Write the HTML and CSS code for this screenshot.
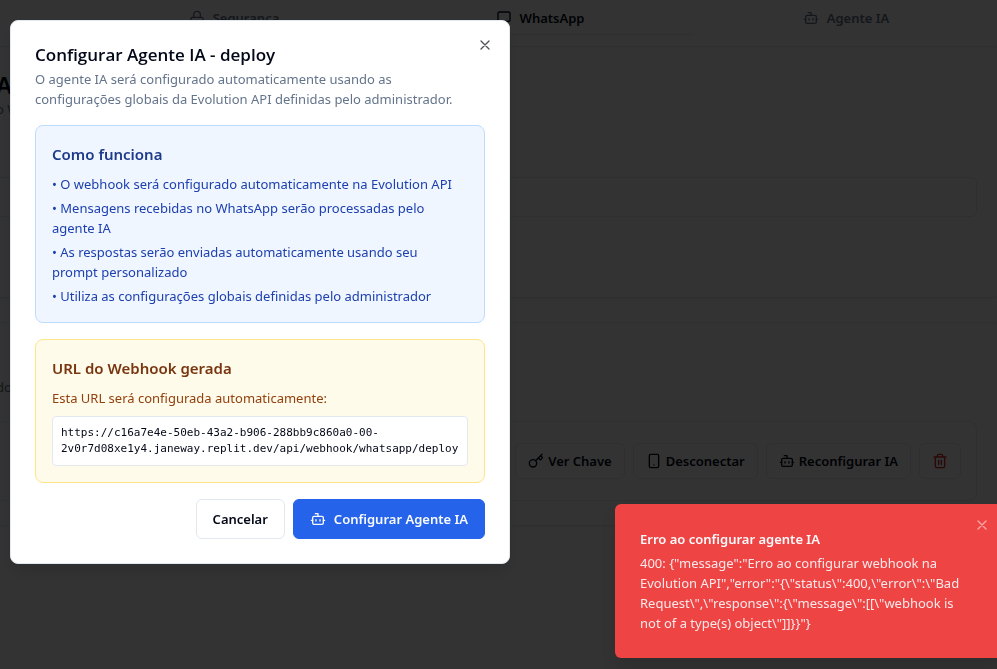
FILE: index.html
```html
<!DOCTYPE html>
<html lang="pt-BR">
<head>
<meta charset="utf-8">
<title>Configurar Agente IA</title>
<link rel="stylesheet" href="styles.css">
</head>
<body>
<svg class="sprite" aria-hidden="true">
  <symbol id="bot" viewBox="0 0 24 24"><path d="M12 8V4H8"/><rect width="16" height="12" x="4" y="8" rx="2"/><path d="M2 14h2M20 14h2M15 13v2M9 13v2"/></symbol>
  <symbol id="x" viewBox="0 0 24 24"><path d="M18 6 6 18M6 6l12 12"/></symbol>
  <symbol id="lock" viewBox="0 0 24 24"><rect width="18" height="11" x="3" y="11" rx="2"/><path d="M7 11V7a5 5 0 0 1 10 0v4"/></symbol>
  <symbol id="message" viewBox="0 0 24 24"><path d="M21 15a2 2 0 0 1-2 2H7l-4 4V5a2 2 0 0 1 2-2h14a2 2 0 0 1 2 2z"/></symbol>
  <symbol id="key" viewBox="0 0 24 24"><path d="m15.5 7.5 2.3 2.3a1 1 0 0 0 1.4 0l2.1-2.1a1 1 0 0 0 0-1.4L19 4M21 2l-9.6 9.6"/><circle cx="7.5" cy="15.5" r="5.5"/></symbol>
  <symbol id="phone" viewBox="0 0 24 24"><rect width="14" height="20" x="5" y="2" rx="2"/><path d="M12 18h.01"/></symbol>
  <symbol id="trash" viewBox="0 0 24 24"><path d="M3 6h18M19 6v14c0 1-1 2-2 2H7c-1 0-2-1-2-2V6M8 6V4c0-1 1-2 2-2h4c1 0 2 1 2 2v2M10 11v6M14 11v6"/></symbol>
</svg>

<div class="page">
  <nav class="tabs">
    <button class="tab"><svg class="icon"><use href="#lock"/></svg>Segurança</button>
    <button class="tab tab-active"><svg class="icon"><use href="#message"/></svg>WhatsApp</button>
    <button class="tab"><svg class="icon"><use href="#bot"/></svg>Agente IA</button>
  </nav>
  <section class="card card-status">
    <h1 class="heading">A</h1>
    <p class="muted">o W</p>
    <div class="field"></div>
  </section>
  <section class="card card-instances">
    <p class="muted">do</p>
    <div class="instance">
      <button class="btn btn-small"><svg class="icon"><use href="#key"/></svg>Ver Chave</button>
      <button class="btn btn-small"><svg class="icon"><use href="#phone"/></svg>Desconectar</button>
      <button class="btn btn-small"><svg class="icon"><use href="#bot"/></svg>Reconfigurar IA</button>
      <button class="btn btn-small btn-danger" aria-label="Excluir"><svg class="icon"><use href="#trash"/></svg></button>
    </div>
  </section>
</div>

<div class="overlay"></div>

<div class="dialog" role="dialog" aria-labelledby="dialog-title">
  <button class="close" aria-label="Fechar"><svg class="icon"><use href="#x"/></svg></button>
  <header>
    <h2 class="dialog-title" id="dialog-title">Configurar Agente IA - deploy</h2>
    <p class="dialog-text">O agente IA será configurado automaticamente usando as configurações globais da Evolution API definidas pelo administrador.</p>
  </header>
  <section class="panel panel-info">
    <h3 class="panel-title">Como funciona</h3>
    <ul class="steps">
      <li>• O webhook será configurado automaticamente na Evolution API</li>
      <li>• Mensagens recebidas no WhatsApp serão processadas pelo agente IA</li>
      <li>• As respostas serão enviadas automaticamente usando seu prompt personalizado</li>
      <li>• Utiliza as configurações globais definidas pelo administrador</li>
    </ul>
  </section>
  <section class="panel panel-warn">
    <h3 class="panel-title">URL do Webhook gerada</h3>
    <p>Esta URL será configurada automaticamente:</p>
    <code class="url">https://c16a7e4e-50eb-43a2-b906-288bb9c860a0-00-2v0r7d08xe1y4.janeway.replit.dev/api/webhook/whatsapp/deploy</code>
  </section>
  <footer class="actions">
    <button class="btn">Cancelar</button>
    <button class="btn btn-primary"><svg class="icon"><use href="#bot"/></svg>Configurar Agente IA</button>
  </footer>
</div>

<div class="toast" role="alert">
  <button class="close" aria-label="Fechar aviso"><svg class="icon"><use href="#x"/></svg></button>
  <h4 class="toast-title">Erro ao configurar agente IA</h4>
  <p class="toast-text">400: {"message":"Erro ao configurar webhook na Evolution API","error":"{\"status\":400,\"error\":\"Bad Request\",\"response\":{\"message\":[[\"webhook is not of a type(s) object\"]]}}"}</p>
</div>
</body>
</html>
```
FILE: styles.css
```css
* { box-sizing: border-box; margin: 0; padding: 0; }
html { height: 100%; overflow: hidden; }
body {
  min-height: 100%;
  overflow: hidden;
  background: #fff;
  color: #020817;
  font: 13px/20px "Segoe UI", "Noto Sans", "Open Sans", sans-serif;
}
button { font: inherit; color: inherit; background: none; border: 0; }
.sprite { display: none; }
.icon {
  width: 16px; height: 16px; flex: none;
  fill: none; stroke: currentColor; stroke-width: 2;
  stroke-linecap: round; stroke-linejoin: round;
}

.page { margin: 0 -5px; }
.tabs {
  display: grid; grid-template-columns: repeat(3, 1fr);
  margin-left: 86px; padding: 2px 3px 4px 0;
  margin-bottom: 8px;
}
.tab {
  display: flex; align-items: center; justify-content: center; gap: 8px;
  height: 32px; border-radius: 4px;
  color: #64748b; font-weight: 600;
}
.tab-active { background: #fff; color: #020817; box-shadow: 0 1px 2px rgba(0, 0, 0, .1); }

.card {
  border: 1px solid #e2e8f0; border-radius: 8px;
  box-shadow: 0 1px 2px rgba(0, 0, 0, .05);
}
.card-status { height: 252px; padding: 24px 24px 24px 0; margin-bottom: 24px; }
.heading { font-size: 24px; line-height: 28px; font-weight: 600; }
.muted { color: #64748b; }
.field { height: 40px; margin-top: 58px; border: 1px solid #e2e8f0; border-radius: 6px; }
.card-instances { height: 204px; padding: 54px 24px 24px 0; }
.instance {
  display: flex; justify-content: flex-end; gap: 8px;
  margin-top: 24px; padding: 21px 15px;
  border: 1px solid #e2e8f0; border-left: 0; border-radius: 8px;
}

.btn {
  display: flex; align-items: center; justify-content: center; gap: 8px;
  height: 40px; padding: 0 16px;
  border: 1px solid #e2e8f0; border-radius: 6px;
  background: #fff; font-weight: 600;
}
.btn-small { height: 36px; padding: 0 12px; gap: 4px; }
.btn-danger { color: #dc2626; }
.btn-primary { background: #2563eb; border-color: #2563eb; color: #f8fafc; }

.overlay { position: fixed; inset: 0; background: rgba(0, 0, 0, .8); }

.dialog {
  position: fixed; left: 10px; top: 20px;
  width: 500px; max-width: 100%; padding: 24px;
  display: grid; gap: 16px;
  background: #fff; border: 1px solid #e2e8f0; border-radius: 8px;
  box-shadow: 0 10px 15px rgba(0, 0, 0, .1);
}
.close { position: absolute; top: 16px; right: 16px; display: flex; color: #52525b; }
.dialog-title {
  font-family: "Segoe UI", "Open Sans", sans-serif;
  font-size: 17px; line-height: 20px; font-weight: 600; margin-bottom: 4px;
}
.dialog-text { color: #64748b; padding-right: 16px; }
.panel { padding: 16px; border: 1px solid; border-radius: 8px; }
.panel-title { font-size: 15px; line-height: 24px; font-weight: 600; margin-bottom: 8px; }
.panel-info { background: #eff6ff; border-color: #bfdbfe; color: #1e40af; }
.panel-info .panel-title { color: #1e3a8a; }
.panel-warn { background: #fffbeb; border-color: #fde68a; color: #92400e; }
.panel-warn .panel-title { color: #78350f; }
.steps { display: grid; gap: 4px; list-style: none; padding-right: 4px; }
.url {
  display: block; margin-top: 8px; padding: 8px;
  background: #fff; border: 1px solid #e2e8f0; border-radius: 4px;
  color: #020817; font: 11px/16px "DejaVu Sans Mono", monospace;
  overflow-wrap: anywhere;
}
.actions { display: flex; justify-content: flex-end; gap: 8px; }

.toast {
  position: fixed; right: -6px; bottom: 11px;
  width: 388px; padding: 25px 32px 25px 25px;
  background: #ef4444; color: #f8fafc; border-radius: 6px;
  box-shadow: 0 10px 15px rgba(0, 0, 0, .1);
}
.toast .close { top: 13px; right: 13px; color: #fca5a5; }
.toast-title { font-size: 13px; font-weight: 600; margin-bottom: 4px; }
.toast-text { opacity: .9; }
```
